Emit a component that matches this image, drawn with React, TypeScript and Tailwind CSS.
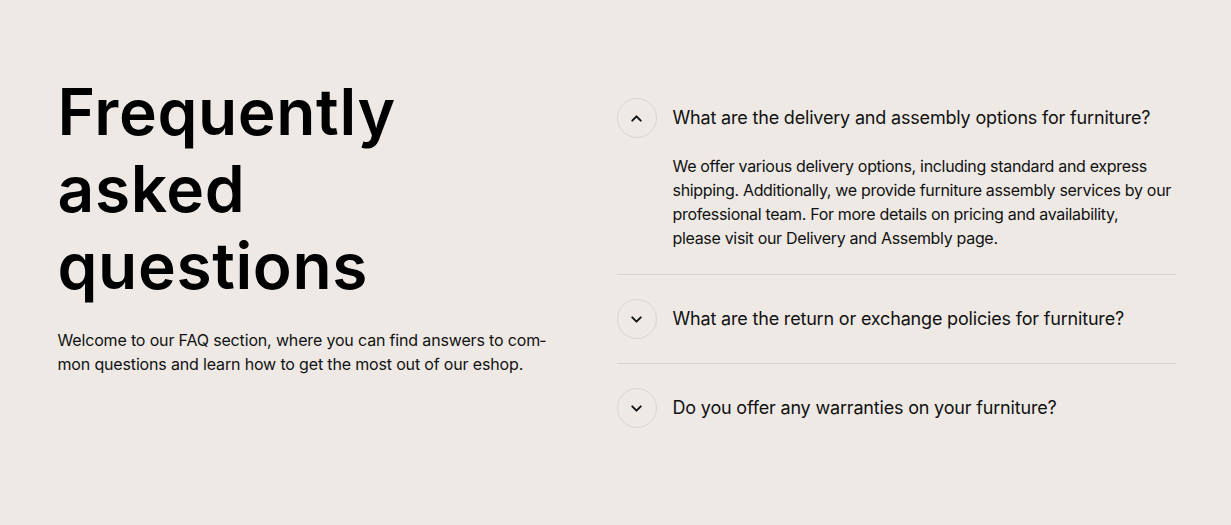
import { ChevronDown, ChevronUp } from 'lucide-react';
import type { ReactNode } from 'react';

const faqs: { q: string; a: ReactNode; open: boolean }[] = [
  {
    q: 'What are the delivery and assembly options for furniture?',
    a: (
      <>
        We offer various delivery options, including standard and express shipping. Additionally, we provide furniture assembly services by our professional team. For more details on pricing and availability,
        <br />
        please visit our Delivery and Assembly page.
      </>
    ),
    open: true,
  },
  {
    q: 'What are the return or exchange policies for furniture?',
    a: null,
    open: false,
  },
  {
    q: 'Do you offer any warranties on your furniture?',
    a: null,
    open: false,
  },
];

export default function App() {
  return (
    <main
      className="min-h-[525px] bg-[#EEE9E5] text-[#111]"
      style={{ fontFamily: 'Inter, "Noto Sans", sans-serif' }}
    >
      <section className="mx-auto grid max-w-[1120px] grid-cols-2 pt-[74px] pl-[2px]">
        {/* Intro */}
        <div>
          <h1 className="text-[64px] font-semibold leading-[1.2] tracking-[0.01em] text-black">
            Frequently
            <br />
            asked
            <br />
            questions
          </h1>
          <p lang="en" className="mt-6 max-w-[495px] text-[16px] leading-6 tracking-[-0.01em]">
            Welcome to our FAQ section, where you can find answers to com&shy;mon questions and learn how to get the most out of our eshop.
          </p>
        </div>

        {/* Accordion */}
        <div>
          {faqs.map((f, i) => (
            <div key={i} className={`py-6 ${i < faqs.length - 1 ? 'border-b border-[#D8D3CF]' : ''}`}>
              <div className="flex items-center gap-4">
                <span className="flex h-10 w-10 shrink-0 items-center justify-center rounded-full border border-[#D8D3CF]">
                  {f.open ? (
                    <ChevronUp size={17} strokeWidth={2.75} />
                  ) : (
                    <ChevronDown size={17} strokeWidth={2.75} />
                  )}
                </span>
                <span className="text-[18px] leading-7 tracking-[-0.01em]">{f.q}</span>
              </div>
              {f.open && (
                <p className="mt-4 pl-14 text-[16px] leading-6 tracking-[-0.02em]">{f.a}</p>
              )}
            </div>
          ))}
        </div>
      </section>
    </main>
  );
}
